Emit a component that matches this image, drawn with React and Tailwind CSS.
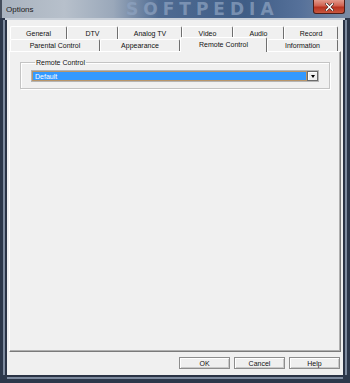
import React from "react";

const row1 = [
  { t: "General", w: "w-[57px]" },
  { t: "DTV", w: "w-[51px]" },
  { t: "Analog TV", w: "w-[64px]" },
  { t: "Video", w: "w-[51px]" },
  { t: "Audio", w: "w-[51px]" },
  { t: "Record", w: "w-[54px]" },
];
const row2 = [
  { t: "Parental Control", w: "w-[90px]" },
  { t: "Appearance", w: "w-[80px]" },
  { t: "Remote Control", w: "w-[87px]", sel: true },
  { t: "Information", w: "w-[71px]" },
];

function Tab({ t, w, sel }) {
  if (sel) {
    return (
      <div
        className={`${w} relative z-10 -mt-[2px] h-[15px] -mb-[1px] flex items-center justify-center pb-[2px] bg-[#f0f0f0] border-t border-l border-white border-r border-r-[#6f6f6f] rounded-t-[2px] text-[7px] leading-none text-[#111]`}
      >
        {t}
      </div>
    );
  }
  return (
    <div
      className={`${w} h-full flex items-center justify-center bg-[#f0f0f0] border-t border-l border-white border-r border-r-[#6f6f6f] rounded-t-[2px] text-[7px] leading-none text-[#111]`}
    >
      {t}
    </div>
  );
}

function Button({ children }) {
  return (
    <div className="w-[51px] h-[12px] flex items-center justify-center bg-[#efefef] border border-[#8d8d8d] shadow-[inset_1px_1px_0_#ffffff,inset_-1px_-1px_0_#c8c8c8] text-[7px] leading-none text-[#111]">
      {children}
    </div>
  );
}

export default function App() {
  return (
    <div className="w-[350px] h-[383px] flex flex-col bg-[#2c374a] overflow-hidden font-['Liberation_Sans',Arial,sans-serif]">
      {/* Title bar */}
      <div className="relative h-[18px] flex items-start bg-[linear-gradient(90deg,#a9b3bf_0%,#b7c0cb_18%,#9aa8ba_32%,#4f6b92_45%,#3f5d86_70%,#56719a_86%,#7b8ca4_100%)] border-l-2 border-[#454e5c] overflow-hidden">
        <div className="absolute left-[124px] top-[1px] text-[17px] font-bold tracking-[5px] text-[#8fa4c2] opacity-70 font-['DejaVu_Sans',sans-serif] leading-[17px] select-none">
          SOFTPEDIA
        </div>
        <span className="relative ml-[4px] mt-[6px] text-[8px] leading-none text-[#1c1c1c]">Options</span>
        <div className="flex-1" />
        <div className="relative mr-[5px] w-[32px] h-[14px] flex items-center justify-center rounded-b-[3px] border border-t-0 border-[#4a1c17] bg-[linear-gradient(180deg,#e29a8c_0%,#d0614f_45%,#b8321f_55%,#c9583f_100%)]">
          <svg width="9" height="8" viewBox="0 0 9 8">
            <path d="M1.5 1 L7.5 7 M7.5 1 L1.5 7" stroke="#3a1a14" strokeWidth="2.6" strokeLinecap="square" />
            <path d="M1.5 1 L7.5 7 M7.5 1 L1.5 7" stroke="#ffffff" strokeWidth="1.5" strokeLinecap="square" />
          </svg>
        </div>
      </div>
      <div className="h-[2px] bg-[#c9d0d9] mx-[5px]" />

      {/* Client */}
      <div className="relative flex-1 mx-[7px] mb-[8px] bg-[#f0f0f0] flex flex-col pt-[6px] shadow-[-2px_0_0_0_#2a3345,-4px_0_0_0_#7d8a9e,2px_0_0_0_#2a3345,4px_0_0_0_#7d8a9e,0_2px_0_0_#2a3345,0_4px_0_0_#7d8a9e]">
        {/* tabs */}
        <div className="flex h-[13px] ml-[3px]">
          {row1.map((r) => (
            <Tab key={r.t} {...r} />
          ))}
        </div>
        <div className="flex h-[12px] ml-[3px]">
          {row2.map((r) => (
            <Tab key={r.t} {...r} />
          ))}
        </div>
        {/* panel */}
        <div className="relative mx-[2px] h-[301px] bg-[#f0f0f0] border-t border-l border-white border-r border-b border-r-[#7a7a7a] border-b-[#7a7a7a] shadow-[inset_-1px_-1px_0_#b0b0b0]">
          <fieldset className="relative ml-[10px] mt-[6px] w-[310px] h-[31px] border border-[#c4c4c4] shadow-[inset_1px_1px_0_#ffffff,1px_1px_0_#ffffff] px-[10px]">
            <legend className="ml-[4px] px-[1px] text-[7px] leading-[9px] text-[#111]">Remote Control</legend>
            <div className="mt-[3px] h-[12px] flex border border-[#b5b5b5] bg-white">
              <div className="flex-1 flex items-center border border-[#b8956a] bg-[#3399ff] pl-[2px] text-[7px] leading-none text-white">
                Default
              </div>
              <div className="w-[11px] flex items-center justify-center bg-[#f0f0f0] border border-[#6b6b6b] shadow-[inset_1px_1px_0_#ffffff]">
                <div className="w-0 h-0 border-l-[2.5px] border-r-[2.5px] border-t-[3px] border-l-transparent border-r-transparent border-t-black" />
              </div>
            </div>
          </fieldset>
        </div>
        {/* buttons */}
        <div className="flex justify-end gap-[4px] mt-[5px] mr-[3px]">
          <Button>OK</Button>
          <Button>Cancel</Button>
          <Button>Help</Button>
        </div>
      </div>
    </div>
  );
}
